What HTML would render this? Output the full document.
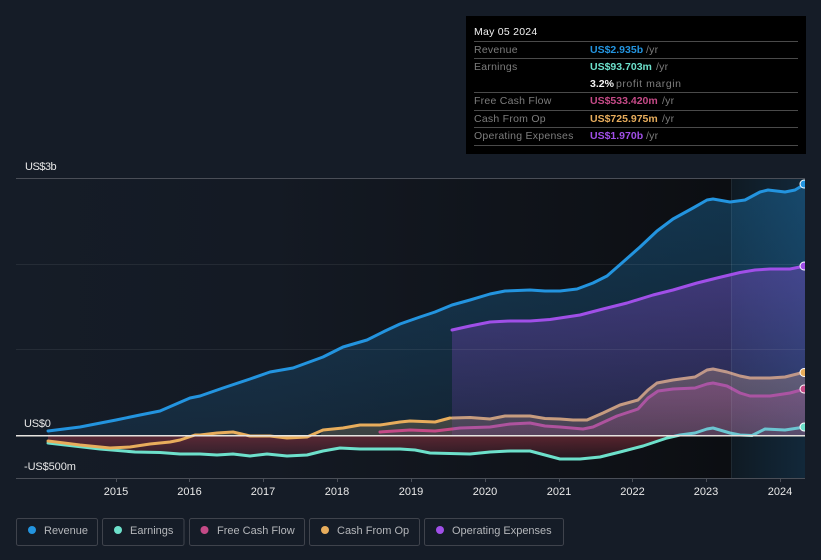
<!DOCTYPE html>
<html><head><meta charset="utf-8"><style>
html,body{margin:0;padding:0;width:821px;height:560px;background:#151c27;overflow:hidden;font-family:"Liberation Sans",sans-serif}
svg{position:absolute;left:0;top:0}
text{font-family:"Liberation Sans",sans-serif}
</style></head><body>
<svg width="821" height="560" viewBox="0 0 821 560" xmlns="http://www.w3.org/2000/svg">
<defs>
<linearGradient id="bg" x1="0" x2="1" y1="0" y2="0"><stop offset="0" stop-color="#151c27"/><stop offset="0.35" stop-color="#141a24"/><stop offset="1" stop-color="#0c0e12"/></linearGradient>
<linearGradient id="fc" x1="0" x2="1" y1="0" y2="0"><stop offset="0" stop-color="#0f1a23"/><stop offset="1" stop-color="#12283a"/></linearGradient>
<linearGradient id="revf" x1="0" x2="0" y1="184" y2="436" gradientUnits="userSpaceOnUse"><stop offset="0" stop-color="#2394df" stop-opacity=".3"/><stop offset="1" stop-color="#2394df" stop-opacity=".12"/></linearGradient>
<linearGradient id="opf" x1="0" x2="0" y1="266" y2="436" gradientUnits="userSpaceOnUse"><stop offset="0" stop-color="#a04fe8" stop-opacity=".33"/><stop offset="1" stop-color="#a04fe8" stop-opacity=".12"/></linearGradient>
<linearGradient id="cfof" x1="0" x2="0" y1="370" y2="436" gradientUnits="userSpaceOnUse"><stop offset="0" stop-color="#e8ad5c" stop-opacity=".35"/><stop offset="1" stop-color="#e8ad5c" stop-opacity=".2"/></linearGradient>
<linearGradient id="fcff" x1="0" x2="0" y1="382" y2="436" gradientUnits="userSpaceOnUse"><stop offset="0" stop-color="#d0417f" stop-opacity=".28"/><stop offset="1" stop-color="#d0417f" stop-opacity=".15"/></linearGradient>
<linearGradient id="neg" x1="0" x2="0" y1="436" y2="460" gradientUnits="userSpaceOnUse"><stop offset="0" stop-color="#b03a4a" stop-opacity=".45"/><stop offset="1" stop-color="#b03a4a" stop-opacity=".12"/></linearGradient>
<clipPath id="c"><rect x="16" y="170" width="789" height="320"/></clipPath>
</defs>

<rect x="16" y="178" width="715" height="301" fill="url(#bg)"/>
<rect x="731" y="178" width="74" height="301" fill="url(#fc)"/>

<g clip-path="url(#c)">
<!-- lower fills -->
<polygon fill="url(#neg)" points="48,436 48,443 100,449 135,452 160,452.5 180,454 200,454 217,455 233,454 250,456 267,454 287,456 307,455 323,451 340,448 360,449 400,449 415,450 430,453 470,454 490,452 510,451 530,451 545,455 560,459 580,459 600,457 620,452 643,446 667,438 680,436"/>
<polygon fill="url(#cfof)" points="195,436 200,435 217,433 233,432 250,436 320,436 323,430 343,428 360,425 380,425 400,422 410,421 435,422 450,418 470,417.5 490,419 505,416 530,416 545,418.500 560,419 573,420 587,420 603,413 620,405 638,400 648,390 657,383 673,380 695,377 707,370 713,369 727,372 740,376 750,378 770,378 785,377 805,372 805,436"/>
<polygon fill="url(#fcff)" points="380,436 380,432 410,430 435,431 460,428 490,427 510,424 530,423 545,426 560,427 583,429 593,427 617,416 638,409 648,398 658,391 673,389 695,388 707,384 713,383 727,386 740,393 750,396 770,396 790,393 805,389 805,436"/>

<!-- lower lines -->
<g fill="none" stroke-width="3" stroke-linejoin="round" stroke-linecap="round">
<polyline stroke="#6de0cb" points="48,443 100,449 135,452 160,452.5 180,454 200,454 217,455 233,454 250,456 267,454 287,456 307,455 323,451 340,448 360,449 400,449 415,450 430,453 470,454 490,452 510,451 530,451 545,455 560,459 580,459 600,457 620,452 643,446 667,438 680,435 695,433 707,429 713,428 730,433 740,435 752,435.500 765,429 785,430 805,427"/>
<polyline stroke="#c54a87" points="452,429 460,428 490,427 510,424 530,423 545,426 560,427 583,429 593,427 617,416 638,409 648,398 658,391 673,389 695,388 707,384 713,383 727,386 740,393 750,396 770,396 790,393 805,389"/>
<polyline stroke="#e8ad5c" points="452,418 470,417.5 490,419 505,416 530,416 545,418.500 560,419 573,420 587,420 603,413 620,405 638,400 648,390 657,383 673,380 695,377 707,370 713,369 727,372 740,376 750,378 770,378 785,377 805,372"/>
</g>

<!-- upper fills -->
<polygon fill="url(#revf)" points="48,436 48,431 80,427 116,420 140,415 160,411 190,398 200,396 223,388 250,379 270,372 293,368 323,357 343,347 367,340 385,331 400,324 420,317 435,312 452,305 470,300 490,294 505,291 530,290 545,291 560,291 577,289 593,283 607,276 623,262 640,247 657,231 673,219 693,208 707,200 713,199 730,202 745,200 760,192 768,190 785,192 795,190 805,184 805,436"/>
<polygon fill="url(#opf)" points="452,436 452,330 470,326 490,322 510,321 530,321 550,319.500 580,315 603,309 627,303 653,295 673,290 697,283 717,278 740,272.500 755,270 770,269 790,269 805,266 805,436"/>

<rect x="731" y="178" width="1" height="301" fill="#fff" fill-opacity=".07"/>
<rect x="16" y="264" width="789" height="1" fill="#fff" fill-opacity=".07"/>
<rect x="16" y="349" width="789" height="1" fill="#fff" fill-opacity=".07"/>

<!-- upper lines -->
<g fill="none" stroke-width="3" stroke-linejoin="round" stroke-linecap="round">
<polyline stroke="#2394df" points="48,431 80,427 116,420 140,415 160,411 190,398 200,396 223,388 250,379 270,372 293,368 323,357 343,347 367,340 385,331 400,324 420,317 435,312 452,305 470,300 490,294 505,291 530,290 545,291 560,291 577,289 593,283 607,276 623,262 640,247 657,231 673,219 693,208 707,200 713,199 730,202 745,200 760,192 768,190 785,192 795,190 805,184"/>
<polyline stroke="#a04fe8" points="452,330 470,326 490,322 510,321 530,321 550,319.500 580,315 603,309 627,303 653,295 673,290 697,283 717,278 740,272.500 755,270 770,269 790,269 805,266"/>
<polyline stroke="#c54a87" points="380,432 410,430 435,431 452,429"/>
<polyline stroke="#e8ad5c" points="48,441 80,445 110,448 130,447 150,444 170,442 180,440 195,435 200,435 217,433 233,432 250,436 270,436 287,438 307,437 323,430 343,428 360,425 380,425 400,422 410,421 435,422 450,418"/>
</g>
<rect x="16" y="435" width="789" height="1.500" fill="#e6e3df"/>

<!-- markers -->
<g stroke="#fff" stroke-width="1">
<circle cx="804" cy="184" r="4" fill="#2394df"/>
<circle cx="804" cy="266" r="4" fill="#a04fe8"/>
<circle cx="804" cy="372.500" r="4" fill="#e8ad5c"/>
<circle cx="804" cy="389" r="4" fill="#c54a87"/>
<circle cx="804" cy="427" r="4" fill="#6de0cb"/>
</g>
</g>

<!-- axis -->
<rect x="16" y="178" width="789" height="1" fill="#4a4e57"/>
<rect x="16" y="478" width="789" height="1" fill="#4a4e57"/>
<g fill="#4a4e57">
<rect x="116" y="479" width="1" height="3"/><rect x="189" y="479" width="1" height="3"/><rect x="263" y="479" width="1" height="3"/><rect x="337" y="479" width="1" height="3"/><rect x="411" y="479" width="1" height="3"/><rect x="485" y="479" width="1" height="3"/><rect x="559" y="479" width="1" height="3"/><rect x="632" y="479" width="1" height="3"/><rect x="706" y="479" width="1" height="3"/><rect x="780" y="479" width="1" height="3"/>
</g>
<g fill="#e8e8e8" font-size="11" text-anchor="middle">
<text x="116" y="495">2015</text><text x="189.500" y="495">2016</text><text x="263" y="495">2017</text><text x="337" y="495">2018</text><text x="411" y="495">2019</text><text x="485" y="495">2020</text><text x="559" y="495">2021</text><text x="632.500" y="495">2022</text><text x="706" y="495">2023</text><text x="780" y="495">2024</text>
</g>
<g fill="#e8e8e8" font-size="11">
<text x="25" y="170" letter-spacing="-.5">US$3b</text>
<text x="24" y="427" letter-spacing="-.2">US$0</text>
<text x="24" y="470" letter-spacing="-.1">-US$500m</text>
</g>

<!-- tooltip -->
<rect x="466" y="16" width="340" height="138" fill="#000"/>
<g fill="#4a4a4a">
<rect x="474" y="41" width="324" height="1"/><rect x="474" y="58" width="324" height="1"/><rect x="474" y="92" width="324" height="1"/><rect x="474" y="110" width="324" height="1"/><rect x="474" y="127" width="324" height="1"/><rect x="474" y="145" width="324" height="1"/>
</g>
<g font-size="10.500" letter-spacing=".25">
<text x="474" y="35" fill="#f2f2f2">May 05 2024</text>
<g fill="#7d7d7d">
<text x="474" y="53">Revenue</text><text x="474" y="70">Earnings</text><text x="474" y="104">Free Cash Flow</text><text x="474" y="122">Cash From Op</text><text x="474" y="139">Operating Expenses</text>
</g>
<g font-weight="bold" letter-spacing="0">
<text x="590" y="53" fill="#2394df">US$2.935b</text>
<text x="590" y="70" fill="#6de0cb">US$93.703m</text>
<text x="590" y="87" fill="#f2f2f2">3.2%</text>
<text x="590" y="104" fill="#c54a87">US$533.420m</text>
<text x="590" y="122" fill="#e8ad5c">US$725.975m</text>
<text x="590" y="139" fill="#a04fe8">US$1.970b</text>
</g>
<g fill="#7d7d7d">
<text x="646" y="53">/yr</text><text x="656" y="70">/yr</text><text x="616" y="87" letter-spacing=".55">profit margin</text><text x="662" y="104">/yr</text><text x="662" y="122">/yr</text><text x="646" y="139">/yr</text>
</g>
</g>

<!-- legend -->
<g fill="none" stroke="#3f434c" stroke-width="1">
<rect x="16.500" y="518.500" width="81" height="27" rx="2"/>
<rect x="102.500" y="518.500" width="81.500" height="27" rx="2"/>
<rect x="189.500" y="518.500" width="115" height="27" rx="2"/>
<rect x="309.500" y="518.500" width="110" height="27" rx="2"/>
<rect x="424.500" y="518.500" width="139" height="27" rx="2"/>
</g>
<circle cx="32" cy="530" r="4" fill="#2394df"/>
<circle cx="118" cy="530" r="4" fill="#6de0cb"/>
<circle cx="204.500" cy="530" r="4" fill="#c54a87"/>
<circle cx="325" cy="530" r="4" fill="#e8ad5c"/>
<circle cx="440" cy="530" r="4" fill="#a04fe8"/>
<g fill="#b4b6ba" font-size="11">
<text x="44" y="534">Revenue</text>
<text x="130" y="534">Earnings</text>
<text x="217" y="534">Free Cash Flow</text>
<text x="337" y="534">Cash From Op</text>
<text x="452" y="534">Operating Expenses</text>
</g>
</svg>
</body></html>
